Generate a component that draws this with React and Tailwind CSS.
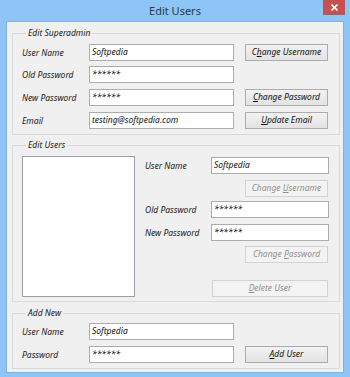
import React from "react";

const F = "font-['Noto_Sans',sans-serif]";

function Label({ children, w = "w-[67px]", extra = "" }) {
  return (
    <div className={`${w} shrink-0 whitespace-nowrap text-left text-[8.5px] italic text-[#1a1a1a] leading-[17px] ${extra}`}>
      {children}
    </div>
  );
}

function TextBox({ value, w = "w-[145px]", extra = "" }) {
  return (
    <div className={`${w} h-[17px] shrink-0 bg-white border border-[#abadb3] px-[2px] pt-[1px] text-[8.5px] italic text-[#111] leading-[11px] whitespace-nowrap ${extra}`}>
      {value}
    </div>
  );
}

function Btn({ children, disabled = false, w = "w-[83px]", extra = "" }) {
  return (
    <div
      className={`${w} h-[17px] shrink-0 flex items-center justify-center whitespace-nowrap text-[8.5px] italic leading-none border ${
        disabled
          ? "border-[#d2d2d2] bg-[#f3f3f3] text-[#8f8f8f]"
          : "border-[#acacac] bg-gradient-to-b from-[#f2f2f2] to-[#e3e3e3] text-[#111]"
      } ${extra}`}
    >
      {children}
    </div>
  );
}

function Group({ title, children, extra = "" }) {
  return (
    <fieldset className={`border border-[#d9d9d9] ${extra}`}>
      <legend className="ml-[4px] px-[2px] text-[8.5px] italic leading-[14px] text-[#1a1a1a]">
        {title}
      </legend>
      {children}
    </fieldset>
  );
}

export default function App() {
  return (
    <div className={`w-[350px] h-[377px] bg-[#8cc5f6] flex flex-col overflow-hidden ${F}`}>
      <div className="h-[21px] shrink-0 relative flex items-center justify-center">
        <span className="text-[11px] text-[#2b3a4b] leading-none">Edit Users</span>
        <div className="absolute right-[5px] top-0 w-[22px] h-[15px] bg-[#c75050] flex items-center justify-center">
          <svg width="7" height="7" viewBox="0 0 7 7">
            <path d="M0.5 0.5L6.5 6.5M6.5 0.5L0.5 6.5" stroke="white" strokeWidth="1.6" />
          </svg>
        </div>
      </div>
      <div className="flex-1 mx-[6px] mb-[4px] bg-[#f0f0f0] border border-[#7fb3df] pl-[5px] pr-[3px] pt-[4px] flex flex-col">
        {/* Edit Superadmin */}
        <Group title="Edit Superadmin" extra="pl-[9px] pr-[10px] pt-[3px] pb-[5px]">
          <div className="flex flex-col gap-[5px]">
            <div className="flex items-center">
              <Label>User Name</Label>
              <TextBox value="Softpedia" />
              <Btn extra="ml-[11px] mt-[1px]">
                <span>C<span className="underline">h</span>ange Username</span>
              </Btn>
            </div>
            <div className="flex items-center">
              <Label>Old Password</Label>
              <TextBox value="******" />
            </div>
            <div className="flex items-center">
              <Label>New Password</Label>
              <TextBox value="******" />
              <Btn extra="ml-[11px] mt-[1px]">
                <span><span className="underline">C</span>hange Password</span>
              </Btn>
            </div>
            <div className="flex items-center">
              <Label>Email</Label>
              <TextBox value="testing@softpedia.com" />
              <Btn extra="ml-[11px] mt-[1px]">
                <span><span className="underline">U</span>pdate Email</span>
              </Btn>
            </div>
          </div>
        </Group>

        {/* Edit Users */}
        <Group title="Edit Users" extra="mt-[3px] pl-[9px] pr-[10px] pt-[4px] pb-[4px]">
          <div className="flex items-start">
            <div className="w-[113px] h-[141px] shrink-0 bg-white border border-[#9a9ea6]" />
            <div className="ml-[10px] grid grid-cols-[66px_118px]">
              <Label w="w-[66px]" extra="mt-[1px]">User Name</Label>
              <TextBox value="Softpedia" w="w-[118px]" extra="mt-[1px]" />
              <Btn disabled extra="col-span-2 justify-self-end mr-[1px] mt-[6px]">
                <span>Change <span className="underline">U</span>sername</span>
              </Btn>
              <Label w="w-[66px]" extra="mt-[4px]">Old Password</Label>
              <TextBox value="******" w="w-[118px]" extra="mt-[4px]" />
              <Label w="w-[66px]" extra="mt-[6px]">New Password</Label>
              <TextBox value="******" w="w-[118px]" extra="mt-[6px]" />
              <Btn disabled extra="col-span-2 justify-self-end mr-[1px] mt-[5px]">
                <span>Change <span className="underline">P</span>assword</span>
              </Btn>
              <Btn disabled w="w-[116px]" extra="col-span-2 justify-self-end mr-[1px] mt-[17px]">
                <span><span className="underline">D</span>elete User</span>
              </Btn>
            </div>
          </div>
        </Group>

        {/* Add New */}
        <Group title="Add New" extra="mt-[4px] pl-[9px] pr-[10px] pt-[3px] pb-[5px]">
          <div className="flex flex-col gap-[5px]">
            <div className="flex items-center">
              <Label>User Name</Label>
              <TextBox value="Softpedia" />
            </div>
            <div className="flex items-center">
              <Label>Password</Label>
              <TextBox value="******" />
              <Btn extra="ml-[11px] mt-[1px]">
                <span><span className="underline">A</span>dd User</span>
              </Btn>
            </div>
          </div>
        </Group>
      </div>
    </div>
  );
}
